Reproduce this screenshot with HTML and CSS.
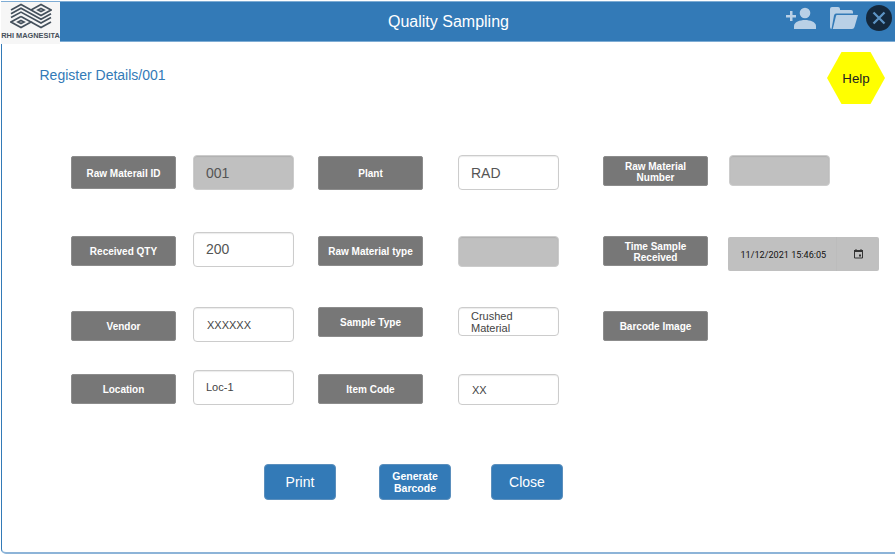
FILE: index.html
```html
<!DOCTYPE html>
<html lang="en">
<head>
<meta charset="utf-8">
<title>Quality Sampling</title>
<link rel="stylesheet" href="styles.css">
</head>
<body>
<header class="topbar">
  <div class="brand">
    <svg class="brand-mark" viewBox="0 0 42 26" width="42" height="26" fill="none" stroke="#44505c" stroke-width="1.7">
      <path d="M1 7 11 1.500 31 12.500 41 7 31 1.500 21 7"/>
      <path d="M1 10.800 11 5.300 31 16.300 41 10.800"/>
      <path d="M1 14.600 11 9.100 31 20.100 41 14.600"/>
      <path d="M11 13.500 1 19 11 24.500 21 19 11 13.500"/>
      <path d="M21 19 31 24.500 41 19"/>
      <path d="M31 5.500 34 7 31 8.500 28 7ZM11 17.500 14 19 11 20.500 8 19Z"/>
    </svg>
    <span class="brand-name">RHI MAGNESITA</span>
  </div>
  <h1 class="title">Quality Sampling</h1>
  <nav class="tools">
    <svg class="add-user" viewBox="0 0 30 22" width="30" height="22" fill="#b9d0e6">
      <path d="M4 4h2.500v4H10v2.500H6.500V14H4v-3.500H0V8h4z"/>
      <circle cx="19" cy="6" r="5.300"/>
      <path d="M8 22v-3c0-4 6-6 11-6s11 2 11 6v3z"/>
    </svg>
    <svg class="folder" viewBox="0 0 28 22" width="28" height="22">
      <path d="M0 20V2Q0 0 2 0h6q2 0 2 2v1h11q2 0 2 2v1.500H6Q4.500 6.500 4 8.500L1.500 22Q0 22 0 20z" fill="#b9d0e6"/>
      <path d="M7 8h21l-3.500 12q-.6 2-2.500 2H2.800L6 9q.2-1 1-1z" fill="#b9d0e6"/>
    </svg>
    <svg class="dismiss" viewBox="0 0 26 26" width="26" height="26">
      <circle cx="13" cy="13" r="13" fill="#14283c"/>
      <path d="M7.500 7.500l11 11m0-11l-11 11" stroke="#5d93c3" stroke-width="2.300"/>
    </svg>
  </nav>
</header>
<main class="panel">
  <div class="heading">
    <h2 class="crumb">Register Details/001</h2>
    <div class="help">Help</div>
  </div>
  <form class="fields">
    <div class="label h33 d1">Raw Materail ID</div>
    <div class="field h35 muted">001</div>
    <div class="label h34 d1">Plant</div>
    <div class="field h35">RAD</div>
    <div class="label h30 d1">Raw Material Number</div>
    <div class="field h31 muted nudge"></div>

    <div class="label h30 d5">Received QTY</div>
    <div class="field h35 d1 raised">200</div>
    <div class="label h30 d5">Raw Material type</div>
    <div class="field h31 muted d5"></div>
    <div class="label h30 d5">Time Sample Received</div>
    <div class="date d6"><span class="stamp">11/12/2021 15:46:05</span>
      <span class="picker"><svg viewBox="0 0 9 10" width="9" height="10"><path d="M.5 1.500h8v7.500h-8z" fill="none" stroke="#333"/><path d="M0 1h9v2H0zM1.500 0h1v2h-1zM6.500 0h1v2h-1zM5 5.500h2v2H5z" fill="#333"/></svg></span>
    </div>

    <div class="label h30 d5">Vendor</div>
    <div class="field h35 small code d1">XXXXXX</div>
    <div class="label h30 d1">Sample Type</div>
    <div class="field h29 small d1">Crushed Material</div>
    <div class="label h30 d5 last">Barcode Image</div>

    <div class="label h30 d4">Location</div>
    <div class="field h35 small raised">Loc-1</div>
    <div class="label h30 d4">Item Code</div>
    <div class="field h31 small code d4">XX</div>
  </form>
  <div class="actions">
    <button class="btn" type="button">Print</button>
    <button class="btn compact" type="button">Generate Barcode</button>
    <button class="btn" type="button">Close</button>
  </div>
</main>
</body>
</html>
```
FILE: styles.css
```css
* { box-sizing: border-box; }
body {
  margin: 0;
  padding: 1px 0 0 1px;
  height: 560px;
  overflow: hidden;
  background: #fff;
  font-family: "Liberation Sans", Arial, sans-serif;
}
.topbar {
  display: grid;
  grid-template-columns: 59px 1fr 109px;
  height: 41px;
  background: #337ab7;
  border-top: 1px solid #7eacd4;
  border-bottom: 1px solid #7eacd4;
}
.brand {
  display: flex;
  flex-direction: column;
  align-items: center;
  height: 42px;
  background: #f6f6f6;
}
.brand-mark { flex: none; margin-top: 1px; }
.brand-name {
  margin-top: 1px;
  color: #46505a;
  font-size: 7.400px;
  font-weight: bold;
  line-height: 11px;
  white-space: nowrap;
}
.title {
  margin: 0;
  padding-left: 51px;
  color: #fff;
  font-size: 16px;
  font-weight: normal;
  line-height: 39px;
  text-align: center;
}
.tools { display: flex; align-items: flex-start; }
.add-user { margin-top: 5px; }
.folder { margin: 5px 0 0 14px; }
.dismiss { flex: none; margin: 3px 0 0 8px; }
.panel {
  height: 512px;
  border: solid #8db4d8;
  border-width: 0 0 2px 1px;
  border-left-color: #337ab7;
  border-radius: 0 0 0 5px;
}
.heading {
  display: flex;
  justify-content: space-between;
  align-items: flex-start;
  height: 113px;
  padding: 10px 10px 0 37.500px;
}
.crumb {
  margin: 14px 0 0;
  color: #337ab7;
  font-size: 14px;
  font-weight: normal;
  line-height: 18px;
}
.help {
  width: 58px;
  height: 52px;
  background: #ff0;
  clip-path: polygon(25% 0, 75% 0, 100% 50%, 75% 100%, 25% 100%, 0 50%);
  color: #222;
  font-size: 13.300px;
  line-height: 53px;
  text-align: center;
}
.fields {
  display: grid;
  grid-template-columns: 122px 125px 140px 145px 125px 151px;
  grid-template-rows: 76px 75px 64px 49px;
  align-items: start;
  margin: 0;
  padding-left: 69px;
}
.label {
  display: flex;
  align-items: center;
  justify-content: center;
  width: 105px;
  padding: 1px 8px 0;
  border: 1px solid #8c8c8c;
  border-radius: 2px;
  background: #777;
  color: #fff;
  font-size: 10px;
  font-weight: bold;
  line-height: 11px;
  text-align: center;
}
.field {
  display: flex;
  align-items: center;
  width: 101px;
  padding: 0 12px;
  border: 1px solid #ccc;
  border-radius: 4px;
  background: #fff;
  box-shadow: inset 0 1px 1px rgba(0, 0, 0, .08);
  color: #555;
  font-size: 14px;
}
.field.small { font-size: 11px; line-height: 12px; color: #444; }
.field.code { padding-left: 13px; }
.field.raised { padding-bottom: 2px; }
.field.muted { background: #c0c0c0; }
.nudge { margin-left: 1px; }
.h29 { height: 29px; }
.h30 { height: 30px; }
.h31 { height: 31px; }
.h33 { height: 33px; }
.h34 { height: 34px; }
.h35 { height: 35px; }
.d1 { margin-top: 1px; }
.d4 { margin-top: 4px; }
.d5 { margin-top: 5px; }
.d6 { margin-top: 6px; }
.last { grid-column-end: span 2; }
.date {
  display: grid;
  grid-template-columns: 108px 43px;
  grid-template-rows: 34px;
  height: 34px;
  border-radius: 2px;
  background: #c0c0c0;
  color: #111;
  font: 9.100px/36px Roboto, sans-serif;
}
.stamp { padding-left: 12.500px; white-space: nowrap; }
.picker {
  display: flex;
  align-items: center;
  justify-content: center;
  border-left: 1px solid #bcbcbc;
}
.actions {
  display: flex;
  padding: 45px 0 0 262px;
}
.btn {
  width: 72px;
  height: 36px;
  margin-right: 43px;
  padding: 0;
  border: 1px solid #5b8fbd;
  border-radius: 4px;
  background: #337ab7;
  color: #fff;
  font: 14px "Liberation Sans", Arial, sans-serif;
}
.btn.compact {
  margin-right: 40px;
  padding: 0 8px;
  font-size: 10.500px;
  font-weight: bold;
  line-height: 12px;
}
```
